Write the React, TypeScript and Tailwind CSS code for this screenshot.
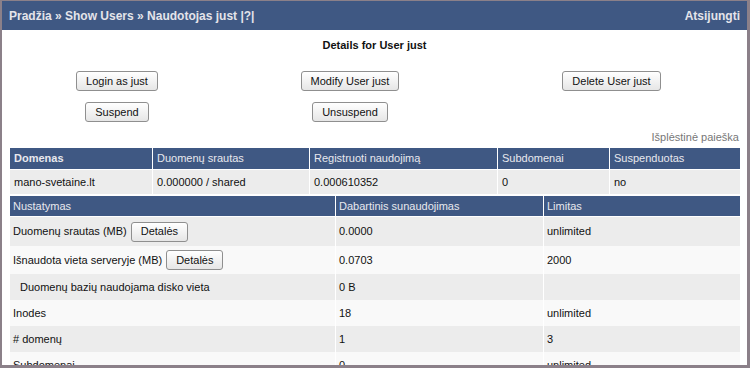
import React from "react"

const font = { fontFamily: '"Liberation Sans", Arial, sans-serif' }

function Btn({ children }: { children: React.ReactNode }) {
	return (
		<button className="h-[20px] px-[9px] rounded-[3px] border border-[#8f8f8f] bg-gradient-to-b from-white to-[#e6e6e6] text-[11px] leading-none text-[#111]">
			{children}
		</button>
	)
}

const usage: { label: React.ReactNode; cur: string; limit: string; h: string; indent?: boolean }[] = [
	{ label: <>Duomenų srautas (MB) <Btn>Detalės</Btn></>, cur: "0.0000", limit: "unlimited", h: "h-[29px]" },
	{ label: <>Išnaudota vieta serveryje (MB) <Btn>Detalės</Btn></>, cur: "0.0703", limit: "2000", h: "h-[28px]" },
	{ label: "Duomenų bazių naudojama disko vieta", cur: "0 B", limit: "", h: "h-[26px]", indent: true },
	{ label: "Inodes", cur: "18", limit: "unlimited", h: "h-[26px]" },
	{ label: "# domenų", cur: "1", limit: "3", h: "h-[26px]" },
	{ label: "Subdomenai", cur: "0", limit: "unlimited", h: "h-[26px]" },
]

export default function App() {
	return (
		<div
			style={font}
			className="w-[750px] h-[368px] overflow-hidden bg-white border-l-2 border-r-[3px] border-b-[3px] border-t border-[#8b8089] text-[11px] text-[#111]"
		>
			{/* top bar */}
			<div className="h-[29px] bg-[#3f5883] flex items-center justify-between pl-[7px] pr-[7px] text-[12px] font-bold text-[#e4e4ea]">
				<span>Pradžia » Show Users » Naudotojas just |?|</span>
				<span>Atsijungti</span>
			</div>

			<div className="text-center font-bold mt-[9px] leading-[13px]">Details for User just</div>

			{/* actions */}
			<div className="grid grid-cols-[230px_236px_279px] mt-[19px] gap-y-[11px]">
				<div className="flex justify-center"><Btn>Login as just</Btn></div>
				<div className="flex justify-center"><Btn>Modify User just</Btn></div>
				<div className="flex justify-center pl-2"><Btn>Delete User just</Btn></div>
				<div className="flex justify-center"><Btn>Suspend</Btn></div>
				<div className="flex justify-center"><Btn>Unsuspend</Btn></div>
				<div />
			</div>

			<div className="text-right pr-[8px] mt-[9px] text-[#777] leading-[13px]">Išplėstinė paieška</div>

			{/* domain table */}
			<div className="mx-[8px] mt-[4px] grid grid-cols-[142px_156px_187px_111px_130px] gap-x-[1px] gap-y-[1px]">
				{["Domenas", "Duomenų srautas", "Registruoti naudojimą", "Subdomenai", "Suspenduotas"].map((h, i) => (
					<div key={h} className={`h-[21px] bg-[#3f5883] text-[#e8e8ee] flex items-center pl-[4px] ${i === 0 ? "font-bold" : ""}`}>
						{h}
					</div>
				))}
				{["mano-svetaine.lt", "0.000000 / shared", "0.000610352", "0", "no"].map((c, i) => (
					<div key={i} className="h-[24px] bg-[#ececec] flex items-center pl-[4px]">{c}</div>
				))}
			</div>

			{/* usage table */}
			<div className="mx-[8px] mt-[2px] grid grid-cols-[325px_207px_196px] gap-x-[1px]">
				{["Nustatymas", "Dabartinis sunaudojimas", "Limitas"].map((h) => (
					<div key={h} className="h-[20px] mb-[1px] bg-[#3f5883] text-[#e8e8ee] flex items-center pl-[3px]">{h}</div>
				))}
				{usage.map((r, i) => {
					const bg = i % 2 === 0 ? "bg-[#ececec]" : "bg-[#f9f9f9]"
					return (
						<React.Fragment key={i}>
							<div className={`${r.h} ${bg} flex items-center gap-[4px] ${r.indent ? "pl-[10px]" : "pl-[3px]"}`}>{r.label}</div>
							<div className={`${r.h} ${bg} flex items-center pl-[3px]`}>{r.cur}</div>
							<div className={`${r.h} ${bg} flex items-center pl-[3px]`}>{r.limit}</div>
						</React.Fragment>
					)
				})}
			</div>
		</div>
	)
}
